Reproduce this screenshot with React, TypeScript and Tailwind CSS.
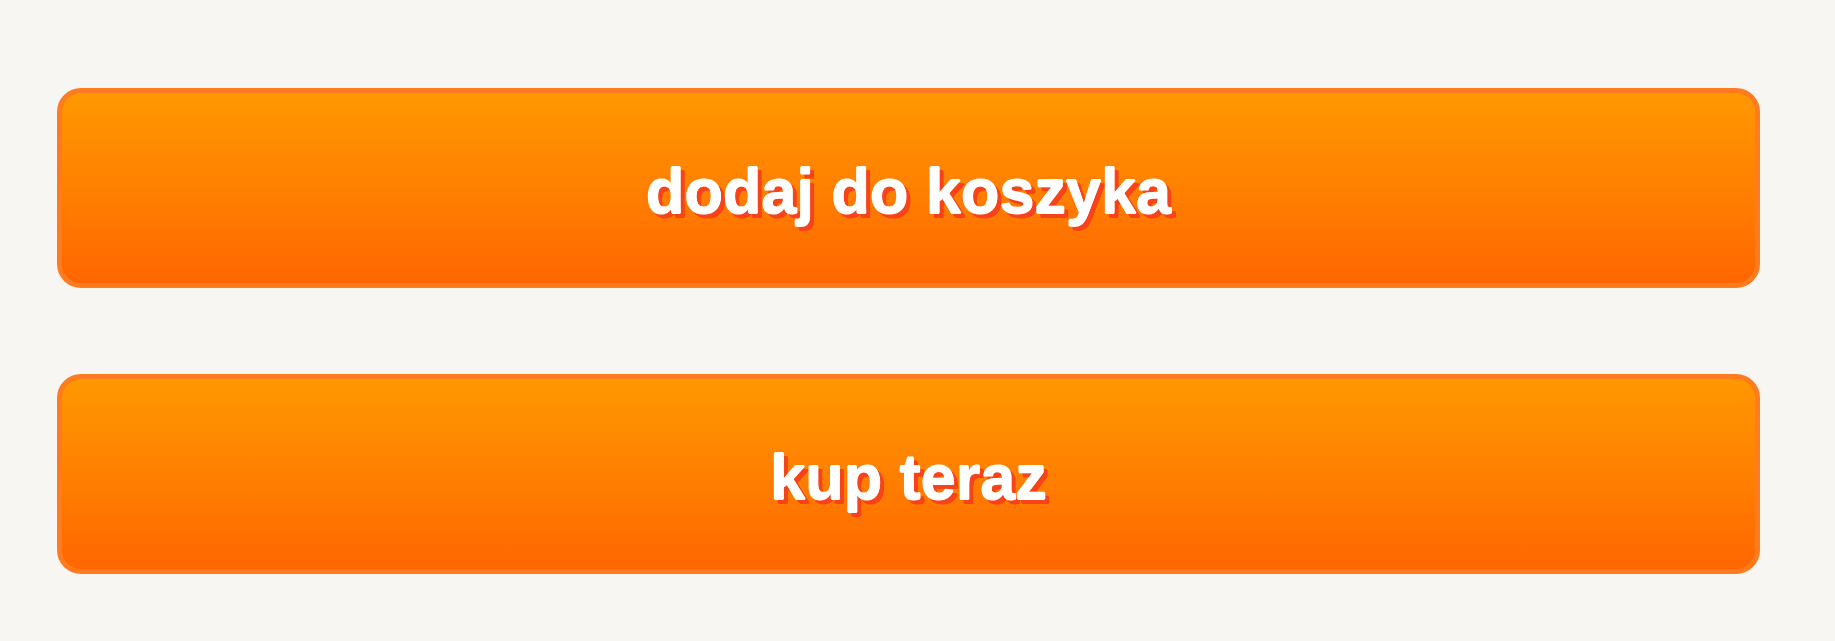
export default function App() {
  const btn =
    "w-[1703px] h-[200px] rounded-[24px] border-[5px] border-[#ff7b1f] bg-gradient-to-b from-[#ff9800] to-[#ff6600] text-white font-bold text-[63px] leading-none pt-[6px] flex items-center justify-center [text-shadow:0.6px_0_0_#fff,-0.6px_0_0_#fff,0_0.6px_0_#fff,0_-0.6px_0_#fff,4px_4px_0_#f8431a,4.6px_4px_0_#f8431a,3.4px_4px_0_#f8431a,4px_4.6px_0_#f8431a,4px_3.4px_0_#f8431a]";
  return (
    <div
      className="w-[1835px] h-[641px] bg-[#f7f6f3] pl-[57px] pt-[88px] flex flex-col gap-[86px]"
      style={{ fontFamily: '"Liberation Sans", Arial, sans-serif' }}
    >
      <button className={btn}>dodaj do koszyka</button>
      <button className={btn}>kup teraz</button>
    </div>
  );
}
